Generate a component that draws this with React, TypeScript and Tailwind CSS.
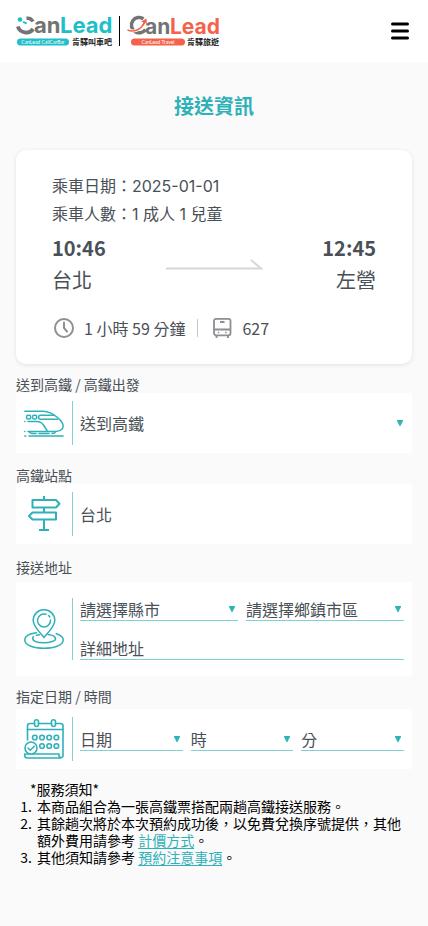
import React from "react";

const TEAL = "#2fb1b9";

function CallCarLogo() {
  return (
    <svg width="96" height="32" viewBox="0 0 96 32" className="overflow-visible" aria-label="CanLead CallCarBar 肯驛叫車吧">
      <circle cx="4" cy="4.500" r="2.300" fill="#1fbfca" />
      <path d="M17 6.500A6.500 6.500 0 0 0 10.500 3.200" fill="none" stroke="#737373" strokeWidth="3.500" />
      <path d="M1.800 11.500a8.800 8.800 0 0 0 15.400 2.500" fill="none" stroke="#737373" strokeWidth="3.800" />
      <path d="M7.500 7.200l2.500 1" fill="none" stroke="#1fbfca" strokeWidth="1.800" strokeLinecap="round" />
      <text x="18" y="18" fontSize="22" fontWeight="700" fill="#737373" className="font-['Inter',sans-serif]">an</text>
      <text x="44" y="18" fontSize="22" fontWeight="700" fill="#1fbfca" className="font-['Inter',sans-serif]">Lead</text>
      <rect x="1" y="23.500" width="52" height="7" rx="3.500" fill="#1fbfca" />
      <text x="27" y="29" fontSize="5" textAnchor="middle" fill="#fff" className="font-['Lato',sans-serif]">CanLead CallCarBar</text>
      <text x="56" y="30" fontSize="8" fontWeight="700" fill="#222" className="font-['Noto_Sans_CJK_TC',sans-serif]">肯驛叫車吧</text>
    </svg>
  );
}

function TravelLogo() {
  return (
    <svg width="92" height="32" viewBox="0 0 92 32" className="overflow-visible" aria-label="CanLead Travel 肯驛旅遊">
      <path d="M16.500 3.800A7.700 7.700 0 1 0 18.500 14.500" fill="none" stroke="#737373" strokeWidth="3.500" />
      <path d="M.5 14.500c6 3.500 14 .5 17.500-8" fill="none" stroke="#fff" strokeWidth="3" />
      <path d="M.5 15c6 2.500 14 0 17-8" fill="none" stroke="#f4624a" strokeWidth="1.500" />
      <path d="M19.500 3.500l-5.500 3 2.500.8-1.300 3 1.500.3 1.500-2.800 1.600 1.700z" fill="#f4624a" />
      <text x="18" y="19" fontSize="21" fontWeight="700" fill="#737373" className="font-['Inter',sans-serif]">an</text>
      <text x="43" y="19" fontSize="21" fontWeight="700" fill="#f4624a" className="font-['Inter',sans-serif]">Lead</text>
      <rect x="4" y="23.500" width="54" height="7" rx="3.500" fill="#f4624a" />
      <text x="31" y="29" fontSize="5" textAnchor="middle" fill="#fff" className="font-['Lato',sans-serif]">CanLead Travel</text>
      <text x="60" y="30" fontSize="8" fontWeight="700" fill="#222" className="font-['Noto_Sans_CJK_TC',sans-serif]">肯驛旅遊</text>
    </svg>
  );
}

function TrainIcon() {
  return (
    <svg width="40" height="40" viewBox="0 0 40 40" fill="none" stroke={TEAL} strokeWidth="1.500" strokeLinecap="round" strokeLinejoin="round">
      <path d="M.8 8.200h18c6 0 11 3 15 6.500 3.500 3 5.400 5.500 5.400 8.300 0 3.700-4 5.500-8.500 5.500H4M.8 28.500h.1" />
      <path d="M.8 18.500h.1M4 18.500h9c3 0 4.800 1.200 6.500 3.500l3.500 5.500" />
      <rect x="2.500" y="12.300" width="4.200" height="3.700" rx="1.600" />
      <rect x="8.500" y="12.300" width="4.200" height="3.700" rx="1.600" />
      <path d="M33.500 16.200H16.500a1.900 1.900 0 0 1 0-3.900h13" />
      <path d="M5.500 29c.5 1.500 1.500 1.600 3 1.600h3.500M15 30.600h10M28 30.600c2 0 3-.3 3.500-1.600M.8 32.900h1M5 32.900h34" />
    </svg>
  );
}

function SignIcon() {
  return (
    <svg width="40" height="40" viewBox="0 0 40 40" fill="none" stroke={TEAL} strokeWidth="2" strokeLinejoin="round">
      <path d="M20 2v4M20 13.500v5M20 25.500V36M15 36h10" />
      <path d="M8.500 6H32l3.500 3.700-3.500 3.800H8.500z" />
      <path d="M32 18.500H8.500L5 22l3.500 3.500H32z" />
    </svg>
  );
}

function PinIcon() {
  return (
    <svg width="40" height="40" viewBox="0 0 40 40" fill="none" stroke={TEAL} strokeWidth="1.500" strokeLinecap="round" strokeLinejoin="round">
      <path d="M20 28.500c-4-5-10.800-11-10.800-17A10.600 10.600 0 0 1 20 .8a10.600 10.600 0 0 1 10.800 10.700c0 6-6.800 12-10.800 17z" />
      <path d="M26.500 11a6.500 6.500 0 1 1-4.500-5.700" />
      <path d="M24.500 6.500a6.500 6.500 0 0 1 1.300 1.500" />
      <path d="M12.500 23.800C5.500 24.700.8 27.300.8 31c0 5 8.500 8.200 19.200 8.200S39.200 36 39.200 31c0-2.800-2.700-5-7-6.300" />
      <path d="M9.500 27.500c-3 4.500 3.500 6.300 10.500 6.300s11.500-2 11.500-3.800c0-2.500-3-4-7.500-4.500M15.500 25.800l-3 .5" />
    </svg>
  );
}

function CalendarIcon() {
  const dots = [
    [10.800, 18.500], [18, 18.500], [25.200, 18.500], [32.400, 18.500],
    [18, 27], [25.200, 27], [32.400, 27],
  ];
  return (
    <svg width="40" height="40" viewBox="0 0 40 40" fill="none" stroke={TEAL} strokeWidth="1.600" strokeLinecap="round" strokeLinejoin="round">
      <path d="M3.500 21V7a2.500 2.500 0 0 1 2.500-2.500h4.500M14.500 4.500h13M31.500 4.500h5A2.500 2.500 0 0 1 39 7v29.500a2 2 0 0 1-4 0V35H.8v1.500A2.500 2.500 0 0 0 3.300 39H37" />
      <path d="M3.500 10.500H39" />
      <rect x="10.500" y=".8" width="4" height="6.700" rx="2" />
      <rect x="27.500" y=".8" width="4" height="6.700" rx="2" />
      {dots.map(([x, y]) => (
        <circle key={`${x}-${y}`} cx={x} cy={y} r="2.300" />
      ))}
      <circle cx="7" cy="29" r="6" fill="#fff" />
      <path d="M4 29l2.300 2.300 4-4" />
    </svg>
  );
}

function Select({ label, underline = true }: { label: string; underline?: boolean }) {
  return (
    <div className="relative min-w-0 flex-1">
      <select
        aria-label={label}
        className={`block h-[23px] w-full appearance-none bg-transparent pr-4 text-base leading-[22px] outline-none ${
          underline ? "border-b border-[#83d0d4]" : ""
        }`}
      >
        <option>{label}</option>
      </select>
      <svg
        className={`pointer-events-none absolute top-2 ${underline ? "right-[3px]" : "right-px"}`}
        width="6"
        height="6"
        viewBox="0 0 6 6"
      >
        <path d="M0 0h6L3 6z" fill={TEAL} stroke={TEAL} strokeWidth=".8" />
      </svg>
    </div>
  );
}

function Panel({
  title,
  icon,
  children,
  className = "",
  boxClass = "py-2",
}: {
  title: string;
  icon: React.ReactNode;
  children: React.ReactNode;
  className?: string;
  boxClass?: string;
}) {
  return (
    <section className={className}>
      <h2 className="text-sm leading-[17px]">{title}</h2>
      <div className={`flex min-h-[60px] bg-white px-2 ${boxClass}`}>
        <div className="flex w-12 shrink-0 items-center">{icon}</div>
        <div className="flex min-w-0 flex-1 flex-col justify-center gap-4 border-l border-[#83d0d4] pl-[7px]">
          {children}
        </div>
      </div>
    </section>
  );
}

const linkClass = "text-[#2fb1b9] underline decoration-1 underline-offset-2";

export default function App() {
  return (
    <div className="min-h-screen bg-[#fafafa] font-['Noto_Sans_CJK_TC',sans-serif] text-[#495057]">
      <header className="flex h-[62px] items-center bg-white px-4">
        <CallCarLogo />
        <div className="mx-[7px] h-[30px] w-px bg-black" />
        <TravelLogo />
        <button aria-label="選單" className="ml-auto">
          <svg width="24" height="24" viewBox="0 0 24 24" fill="none" stroke="#000" strokeWidth="3" strokeLinecap="round">
            <path d="M4.500 5h15M4.500 12h15M4.500 19h15" />
          </svg>
        </button>
      </header>

      <main className="px-4 pb-14">
        <h1 className="pt-[29px] text-center text-xl leading-[30px] font-bold text-[#2fb1b9]">接送資訊</h1>

        <div className="mt-[29px] rounded-[10px] bg-white px-9 pt-[22px] pb-6 shadow-[0_1px_4px_rgba(0,0,0,0.1)]">
          <div className="font-['Inter','Noto_Sans_CJK_TC',sans-serif] text-base leading-7">
            <p>乘車日期：2025-01-01</p>
            <p>乘車人數：1 成人 1 兒童</p>
          </div>
          <div className="mt-1 flex items-center justify-between text-xl leading-8">
            <div>
              <p className="font-bold">10:46</p>
              <p>台北</p>
            </div>
            <svg width="98" height="12" viewBox="0 0 98 12" fill="none" stroke="#d6d6d6" strokeWidth="2">
              <path d="M1 10.500h95L86 2" />
            </svg>
            <div className="text-right">
              <p className="font-bold">12:45</p>
              <p>左營</p>
            </div>
          </div>
          <div className="mt-5 flex h-6 items-center text-base">
            <svg width="24" height="24" viewBox="0 0 24 24" fill="none" stroke="#8e8e93" strokeWidth="2" strokeLinecap="round">
              <circle cx="12" cy="12" r="9" />
              <path d="M12 6.500V12l3 3.500" />
            </svg>
            <span className="ml-2">1 小時 59 分鐘</span>
            <span className="mx-3 h-[18px] w-px bg-[#c8c8cc]" />
            <svg width="24" height="24" viewBox="0 0 24 24" fill="none" stroke="#8e8e93" strokeWidth="1.800">
              <rect x="4" y="2.800" width="16.500" height="16.500" rx="2" />
              <path d="M4 13.500h16.500M10 6h4.500M6.500 19.300v2.700M18 19.300v2.700" />
              <path d="M7.800 16.400h1.500M15.200 16.400h1.500" strokeWidth="1.500" />
            </svg>
            <span className="ml-2">627</span>
          </div>
        </div>

        <Panel title="送到高鐵 / 高鐵出發" icon={<TrainIcon />} className="mt-3">
          <div className="flex">
            <Select label="送到高鐵" underline={false} />
          </div>
        </Panel>

        <Panel title="高鐵站點" icon={<SignIcon />} className="mt-[14px]">
          <p className="text-base leading-[23px]">台北</p>
        </Panel>

        <Panel title="接送地址" icon={<PinIcon />} className="mt-[15px]" boxClass="mt-[6px] py-4">
          <div className="flex gap-2">
            <Select label="請選擇縣市" />
            <Select label="請選擇鄉鎮市區" />
          </div>
          <input
            aria-label="詳細地址"
            placeholder="詳細地址"
            className="block h-[23px] w-full border-b border-[#83d0d4] bg-transparent text-base leading-[22px] outline-none placeholder:text-[#495057]"
          />
        </Panel>

        <Panel title="指定日期 / 時間" icon={<CalendarIcon />} className="mt-3" boxClass="mt-1 py-2">
          <div className="flex gap-2">
            <Select label="日期" />
            <Select label="時" />
            <Select label="分" />
          </div>
        </Panel>

        <div className="mt-3 text-sm leading-[17px] text-black">
          <p className="pl-[14px]">*服務須知*</p>
          <ol className="list-decimal pl-[19px]">
            <li className="pl-[2px]">本商品組合為一張高鐵票搭配兩趟高鐵接送服務。</li>
            <li className="pl-[2px]">
              其餘趟次將於本次預約成功後，以免費兌換序號提供，其他額外費用請參考{" "}
              <a href="#pricing" className={linkClass}>計價方式</a>。
            </li>
            <li className="pl-[2px]">
              其他須知請參考{" "}
              <a href="#notice" className={linkClass}>預約注意事項</a>。
            </li>
          </ol>
        </div>
      </main>
    </div>
  );
}
